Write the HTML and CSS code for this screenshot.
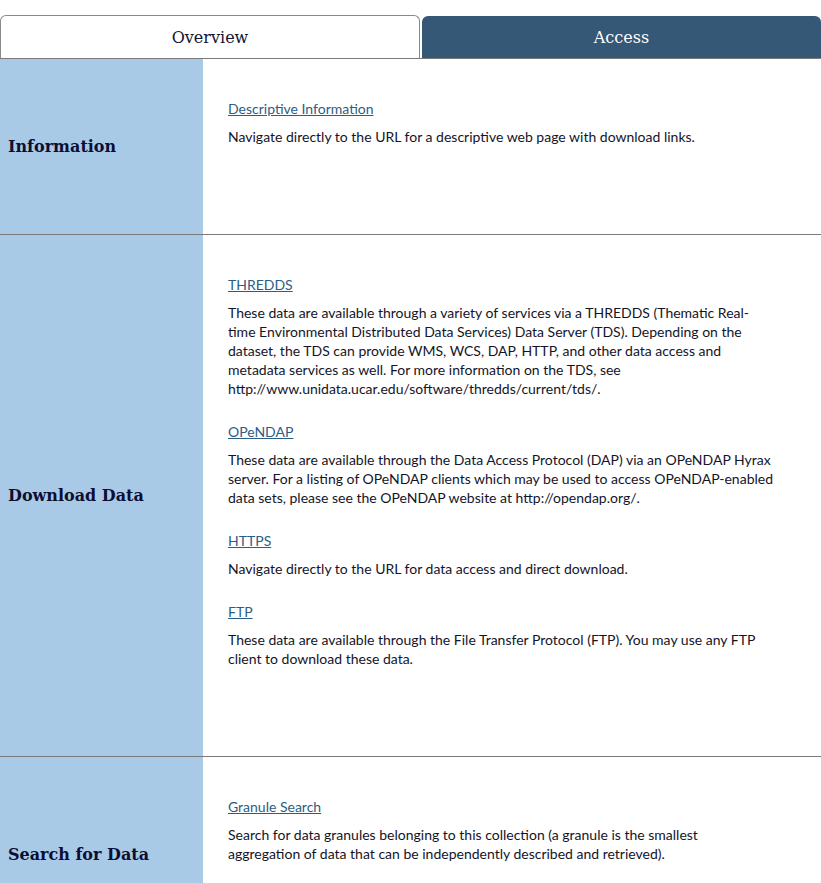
FILE: index.html
```html
<!DOCTYPE html>
<html lang="en">
<head>
<meta charset="utf-8">
<title>Access</title>
<link rel="stylesheet" href="styles.css">
</head>
<body>
<nav class="tabs">
  <div class="tab tab-overview">Overview</div>
  <div class="tab tab-access">Access</div>
</nav>
<main class="sections">
  <section class="row">
    <div class="label"><h2>Information</h2></div>
    <div class="content">
      <div class="item">
        <a href="#">Descriptive Information</a>
        <p>Navigate directly to the URL for a descriptive web page with download links.</p>
      </div>
    </div>
  </section>
  <section class="row">
    <div class="label"><h2>Download Data</h2></div>
    <div class="content">
      <div class="item">
        <a href="#">THREDDS</a>
        <p>These data are available through a variety of services via a THREDDS (Thematic Real-time Environmental Distributed Data Services) Data Server (TDS). Depending on the dataset, the TDS can provide WMS, WCS, DAP, HTTP, and other data access and metadata services as well. For more information on the TDS, see http://www.unidata.ucar.edu/software/thredds/current/tds/.</p>
      </div>
      <div class="item">
        <a href="#">OPeNDAP</a>
        <p>These data are available through the Data Access Protocol (DAP) via an OPeNDAP Hyrax server. For a listing of OPeNDAP clients which may be used to access OPeNDAP-enabled data sets, please see the OPeNDAP website at http://opendap.org/.</p>
      </div>
      <div class="item">
        <a href="#">HTTPS</a>
        <p>Navigate directly to the URL for data access and direct download.</p>
      </div>
      <div class="item">
        <a href="#">FTP</a>
        <p>These data are available through the File Transfer Protocol (FTP). You may use any FTP client to download these data.</p>
      </div>
    </div>
  </section>
  <section class="row">
    <div class="label"><h2>Search for Data</h2></div>
    <div class="content">
      <div class="item">
        <a href="#">Granule Search</a>
        <p class="narrow">Search for data granules belonging to this collection (a granule is the smallest aggregation of data that can be independently described and retrieved).</p>
      </div>
    </div>
  </section>
</main>
</body>
</html>
```
FILE: styles.css
```css
* { box-sizing: border-box; }
html, body { margin: 0; padding: 0; background: #fff; }
body { font-family: Lato, "Noto Sans", sans-serif; color: #141428; }

.tabs {
  display: flex;
  gap: 2px;
  padding-top: 15px;
  border-bottom: 1px solid #7a7a7a;
}
.tab {
  height: 43px;
  display: flex;
  align-items: center;
  justify-content: center;
  font-family: "DejaVu Serif", serif;
  font-size: 16px;
  border-radius: 6px 6px 0 0;
}
.tab-overview {
  flex: 0 0 420px;
  background: #fff;
  border: 1px solid #8a8a8a;
  border-bottom: none;
  color: #121235;
}
.tab-access {
  flex: 1 1 auto;
  background: #355877;
  color: #fff;
  margin-top: 1px;
  height: 42px;
}

.row {
  display: grid;
  grid-template-columns: 203px 1fr;
  border-bottom: 1px solid #7a7a7a;
}
.label {
  background: #a8cae6;
  display: flex;
  align-items: center;
  padding-left: 8px;
}
.label h2 {
  margin: 0;
  font-family: "DejaVu Serif", serif;
  font-weight: bold;
  font-size: 16px;
  color: #0e0e33;
}
.content {
  padding: 40px 46px 88px 25px;
  display: flex;
  flex-direction: column;
  gap: 24px;
}
.content .item + .item { margin-top: 0; }
.item {
  display: flex;
  flex-direction: column;
  gap: 9px;
  align-items: flex-start;
}
.item a {
  font-size: 14px;
  line-height: 19px;
  color: #2c5d85;
  text-decoration: underline;
}
.item p {
  margin: 0;
  font-size: 14px;
  line-height: 19px;
}
.item p.narrow { max-width: 538px; }
```
